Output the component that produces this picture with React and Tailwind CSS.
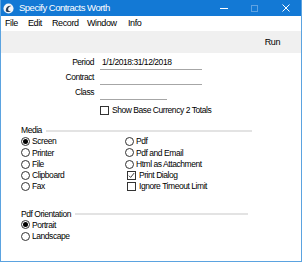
import React from 'react';

const menu = [
  { label: 'File', w: 'w-[23px]' },
  { label: 'Edit', w: 'w-[24px]' },
  { label: 'Record', w: 'w-[35px]' },
  { label: 'Window', w: 'w-[41px]' },
  { label: 'Info', w: 'w-[20px]' },
];

function Radio({ checked, label }) {
  return (
    <div className="flex h-[11.25px] items-center gap-[2px]">
      <span className="flex h-[9px] w-[9px] shrink-0 items-center justify-center rounded-full border border-[#333333] bg-white">
        {checked && <span className="h-[5px] w-[5px] rounded-full bg-black" />}
      </span>
      <span className="leading-none">{label}</span>
    </div>
  );
}

function Check({ checked, label, className = '' }) {
  return (
    <div className={`flex items-center gap-[3px] ${className}`}>
      <span className="flex h-[9px] w-[9px] shrink-0 items-center justify-center border border-[#333333] bg-white">
        {checked && (
          <svg viewBox="0 0 8 8" className="h-[7px] w-[7px]">
            <path d="M1 4.2 L3 6.2 L7 1.2" stroke="#222" strokeWidth="1" fill="none" />
          </svg>
        )}
      </span>
      <span className="leading-none">{label}</span>
    </div>
  );
}

function Field({ label, value, width }) {
  return (
    <div className="flex h-[15px] items-center">
      <div className="w-[93px] text-right leading-none">{label}</div>
      <div className={`ml-[6px] flex h-[14px] items-center border-b border-[#a6a6a6] pl-[2px] leading-none ${width}`}>
        {value}
      </div>
    </div>
  );
}

function Section({ title, line }) {
  return (
    <div className="flex h-[11px] items-center gap-[4px] pl-[20px]">
      <span className="leading-none">{title}</span>
      <span className={`h-[2px] bg-[#e3e3e3] ${line}`} />
    </div>
  );
}

export default function App() {
  return (
    <div className="flex h-[262px] w-[302px] flex-col border-x border-b border-[#5ba3e0] bg-white text-[8.5px] tracking-[-0.45px] text-black [font-family:'Liberation_Sans',sans-serif]">
      {/* title bar */}
      <div className="flex h-[16px] shrink-0 items-center bg-[#1379d5] text-[9.5px] tracking-[-0.5px] text-white">
        <svg viewBox="0 0 12 12" className="ml-[2px] h-[11px] w-[11px]">
          <circle cx="6" cy="6" r="5.5" fill="#f4f6f9" />
          <path d="M3 8.5 C3 4.5 6 2.5 9 3.2 C7 3.6 5.5 5 5.6 7 C5.7 8.6 7.4 9.2 8.8 8.4 C7.6 10.2 3.4 10.4 3 8.5 Z" fill="#2c3e56" />
        </svg>
        <span className="ml-[5px] leading-none">Specify Contracts Worth</span>
        <div className="ml-auto flex h-full">
          <div className="flex w-[31px] items-center justify-center">
            <span className="h-px w-[8px] bg-white" />
          </div>
          <div className="flex w-[31px] items-center justify-center">
            <span className="h-[7px] w-[7px] border border-[#5fa2e2]" />
          </div>
          <div className="flex w-[31px] items-center justify-center">
            <svg viewBox="0 0 8 8" className="h-[8px] w-[8px]">
              <path d="M0.5 0.5 L7.5 7.5 M7.5 0.5 L0.5 7.5" stroke="#ffffff" strokeWidth="1" />
            </svg>
          </div>
        </div>
      </div>

      {/* menu bar */}
      <div className="flex h-[15px] shrink-0 items-center pl-[4px] text-[9px] leading-none tracking-[-0.4px]">
        {menu.map((m) => (
          <span key={m.label} className={m.w}>{m.label}</span>
        ))}
      </div>

      {/* toolbar */}
      <div className="flex h-[22px] shrink-0 items-center justify-end bg-[#f0f0f0] pr-[21px] text-[9px] leading-none tracking-[-0.4px]">
        Run
      </div>

      {/* form */}
      <div className="mt-[2px] flex flex-col">
        <Field label="Period" value="1/1/2018:31/12/2018" width="w-[102px]" />
        <Field label="Contract" value="" width="w-[102px]" />
        <Field label="Class" value="" width="w-[67px]" />
        <Check label="Show Base Currency 2 Totals" className="ml-[99px] mt-[3px] h-[14px]" />
      </div>

      <div className="mt-[8px]">
        <Section title="Media" line="w-[206px]" />
        <div className="grid grid-cols-[104px_1fr] pl-[20px]">
          <div className="flex flex-col">
            <Radio checked label="Screen" />
            <Radio label="Printer" />
            <Radio label="File" />
            <Radio label="Clipboard" />
            <Radio label="Fax" />
          </div>
          <div className="flex flex-col">
            <Radio label="Pdf" />
            <Radio label="Pdf and Email" />
            <Radio label="Html as Attachment" />
            <Check checked label="Print Dialog" className="ml-[2px] h-[11.25px]" />
            <Check label="Ignore Timeout Limit" className="ml-[2px] h-[11.25px]" />
          </div>
        </div>
      </div>

      <div className="mt-[16px]">
        <Section title="Pdf Orientation" line="w-[173px]" />
        <div className="flex flex-col pl-[20px]">
          <Radio checked label="Portrait" />
          <Radio label="Landscape" />
        </div>
      </div>
    </div>
  );
}
